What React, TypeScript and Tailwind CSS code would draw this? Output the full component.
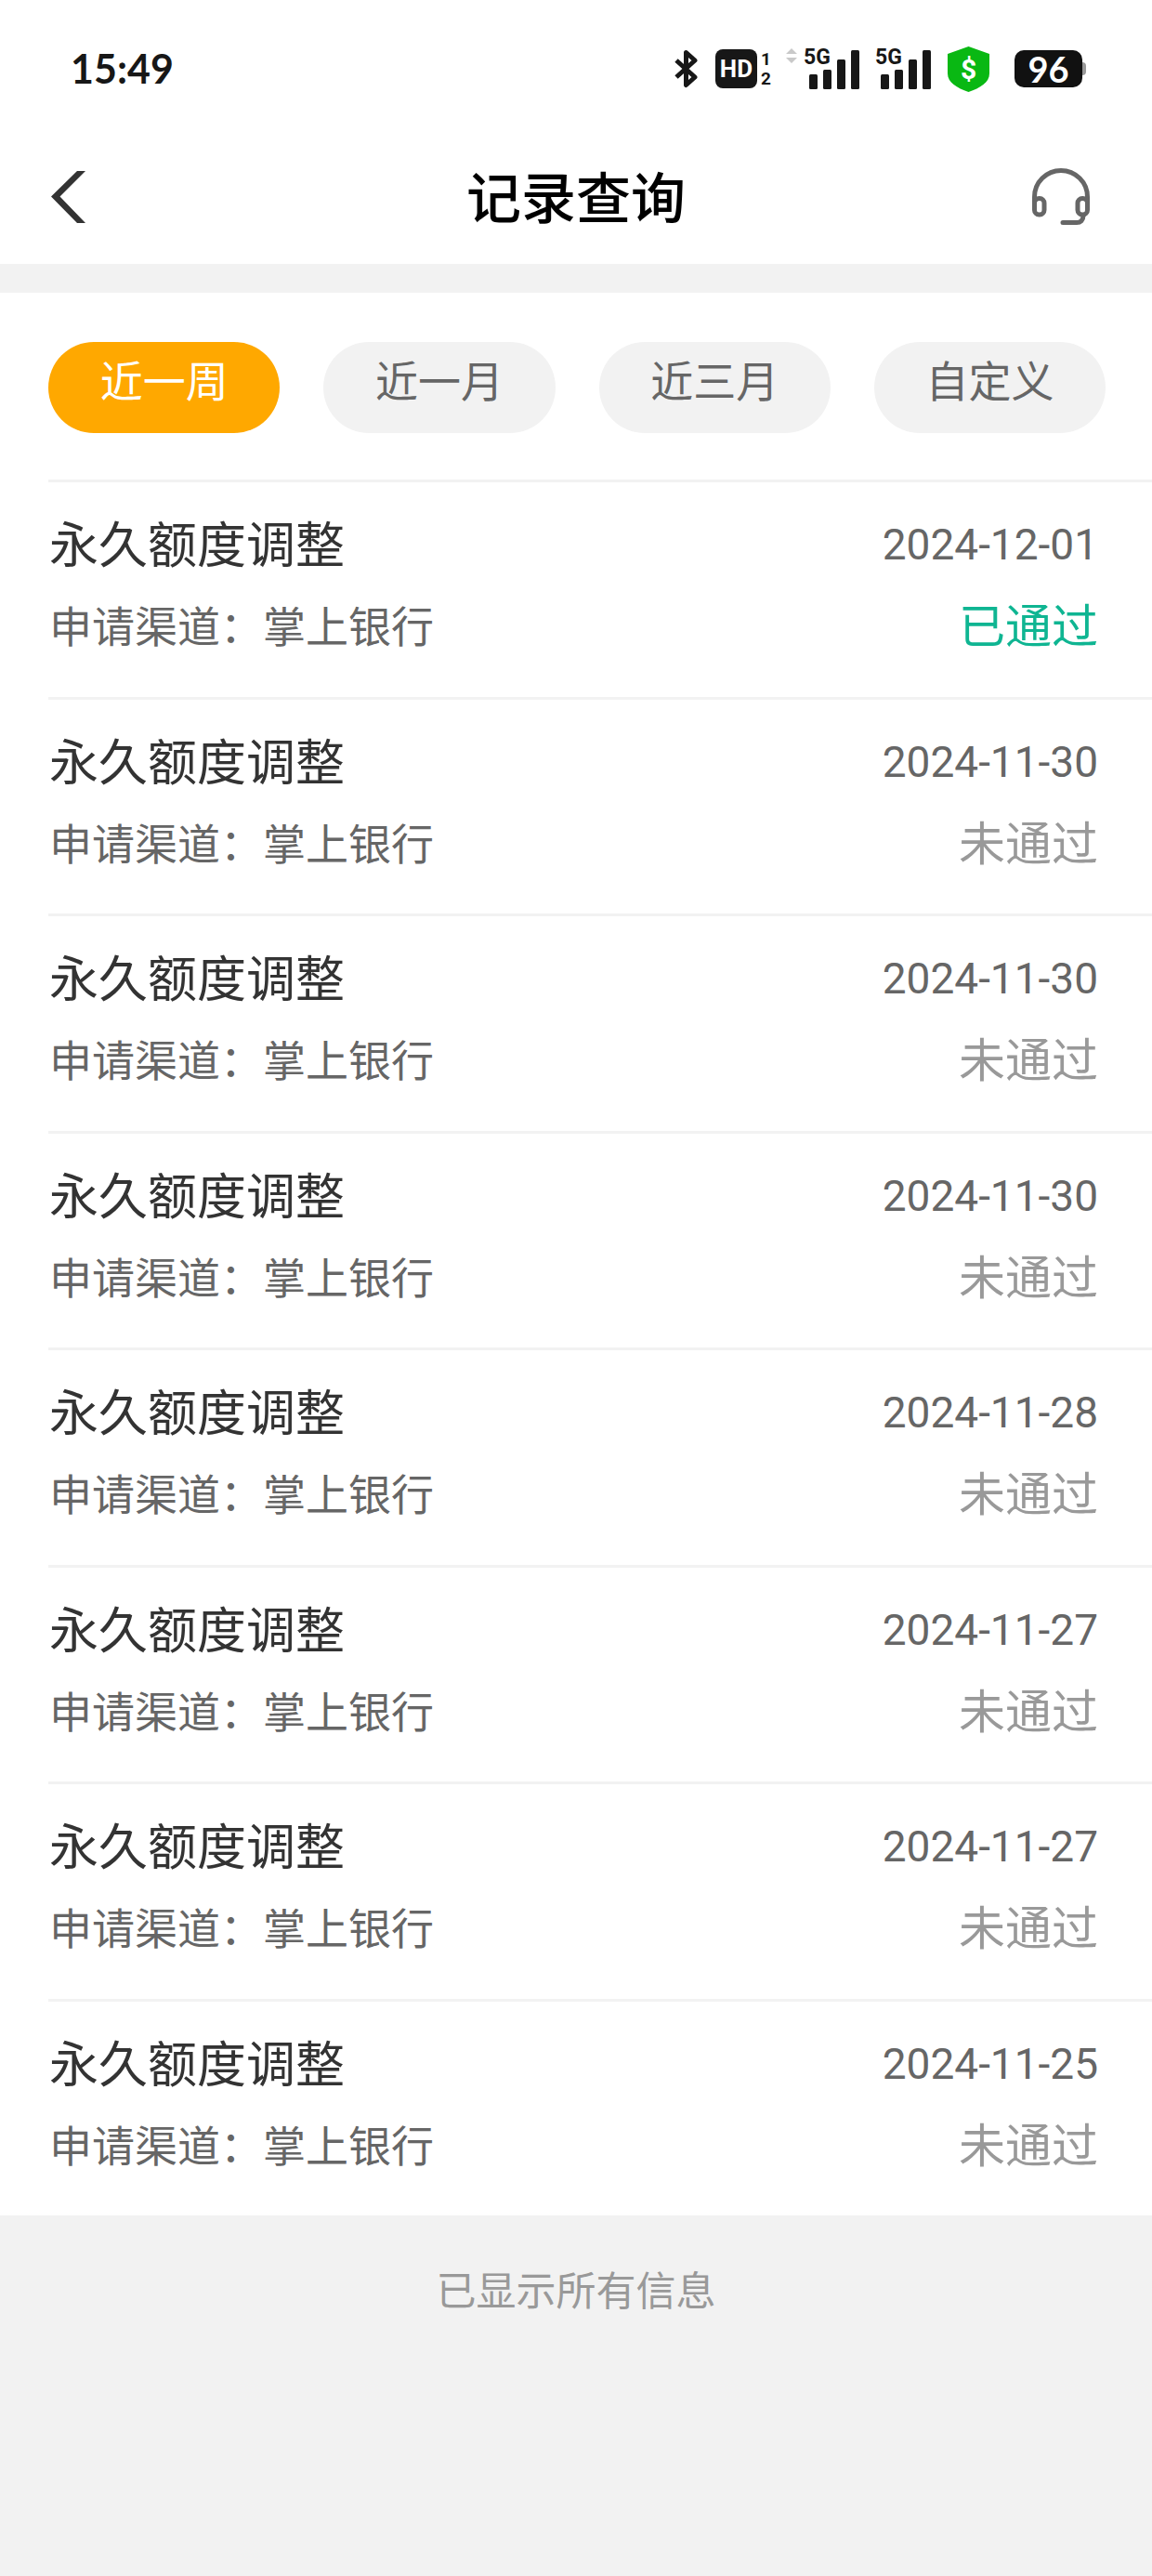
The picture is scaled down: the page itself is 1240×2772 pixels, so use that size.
import { useState } from "react";

type RecordItem = {
	id: number;
	title: string;
	channel: string;
	date: string;
	status: "passed" | "rejected";
};

const ranges = ["近一周", "近一月", "近三月", "自定义"];

const records: RecordItem[] = [
	{ id: 1, title: "永久额度调整", channel: "掌上银行", date: "2024-12-01", status: "passed" },
	{ id: 2, title: "永久额度调整", channel: "掌上银行", date: "2024-11-30", status: "rejected" },
	{ id: 3, title: "永久额度调整", channel: "掌上银行", date: "2024-11-30", status: "rejected" },
	{ id: 4, title: "永久额度调整", channel: "掌上银行", date: "2024-11-30", status: "rejected" },
	{ id: 5, title: "永久额度调整", channel: "掌上银行", date: "2024-11-28", status: "rejected" },
	{ id: 6, title: "永久额度调整", channel: "掌上银行", date: "2024-11-27", status: "rejected" },
	{ id: 7, title: "永久额度调整", channel: "掌上银行", date: "2024-11-27", status: "rejected" },
	{ id: 8, title: "永久额度调整", channel: "掌上银行", date: "2024-11-25", status: "rejected" },
];

function BluetoothIcon() {
	return (
		<svg width="26" height="42" viewBox="0 0 26 42" fill="none" stroke="#171717" strokeWidth="5">
			<path d="M2 12 22 30 12.500 38.500V3.500L22 12 2 30" strokeLinejoin="round" />
		</svg>
	);
}

function SignalIcon() {
	return (
		<div className="relative flex h-[44px] w-[60px] items-end justify-end">
			<span className="absolute top-0 left-0 font-['Roboto'] text-[23px] leading-[20px] font-bold">
				5G
			</span>
			<svg width="54" height="43" viewBox="0 0 54 43" fill="#171717">
				<rect x="0" y="27" width="9" height="16" rx="1.500" />
				<rect x="15" y="22" width="9" height="21" rx="1.500" />
				<rect x="30" y="11" width="9" height="32" rx="1.500" />
				<rect x="45" y="1" width="9" height="42" rx="1.500" />
			</svg>
		</div>
	);
}

function StatusBar() {
	return (
		<div className="flex h-[140px] items-center justify-between pt-2 pr-[71px] pl-[76px] text-[#171717]">
			<span className="font-['Lato'] text-[43px] leading-[48px] font-bold">15:49</span>
			<div className="flex items-center">
				<BluetoothIcon />
				<span className="ml-[18px] flex h-[42px] w-[45px] items-center justify-center rounded-lg bg-[#171717] font-['Roboto'] text-[26px] font-bold text-white">
					HD
				</span>
				<span className="ml-1 flex w-[11px] flex-col font-['Roboto'] text-[19px] leading-[21px] font-bold">
					<span>1</span>
					<span>2</span>
				</span>
				<svg className="mr-[7px] ml-4 -mt-7" width="12" height="16" viewBox="0 0 12 16" fill="#c9c9c9">
					<path d="M6 0 12 6H0zM0 10h12l-6 6z" />
				</svg>
				<SignalIcon />
				<div className="ml-[17px]">
					<SignalIcon />
				</div>
				<svg className="ml-[18px]" width="45" height="49" viewBox="0 0 45 49">
					<path d="M22.500 0 45 8v21c0 10-10 15.500-22.500 20C10 44.500 0 39 0 29V8z" fill="#09b813" />
					<text
						x="22.500"
						y="35"
						textAnchor="middle"
						fill="#fff"
						className="font-['Roboto'] text-[30px] font-bold"
					>
						$
					</text>
				</svg>
				<span className="ml-[27px] flex h-10 w-[73px] items-center justify-center rounded-[10px] bg-[#111] font-['Lato'] text-[38px] leading-[40px] font-bold text-white">
					96
				</span>
				<span className="h-[14px] w-1 rounded-r bg-[#999]" />
			</div>
		</div>
	);
}

function Header() {
	return (
		<header className="flex h-[144px] items-center justify-between pr-[67px] pl-[55px]">
			<button type="button" aria-label="返回" className="flex w-[74px]">
				<svg width="37" height="56" viewBox="0 0 37 56" fill="#333">
					<path d="M28 0h9L9.500 27.500 37 56h-9L0 27.500z" />
				</svg>
			</button>
			<h1 className="pt-1.5 text-[59px] leading-[72px] font-medium text-black">记录查询</h1>
			<button type="button" aria-label="客服" className="flex">
				<svg
					width="62"
					height="62"
					viewBox="0 0 62 62"
					fill="none"
					stroke="#666"
					strokeWidth="5"
					strokeLinecap="round"
				>
					<path d="M2.500 40V31a28.500 28.500 0 0 1 57 0v9" />
					<rect x="2.500" y="32.500" width="10.500" height="17.500" rx="5" />
					<rect x="49" y="32.500" width="10.500" height="17.500" rx="5" />
					<path d="M55 51c0 5-3 7.500-7 7.500H33" />
				</svg>
			</button>
		</header>
	);
}

function RecordRow({ record }: { record: RecordItem }) {
	const passed = record.status === "passed";

	return (
		<li className="ml-[52px] flex flex-col gap-[17px] border-t-3 border-[#f2f2f2] pt-[33px] pr-[58px] pl-px leading-[68px] odd:pb-[41px] even:pb-10">
			<div className="flex items-start justify-between">
				<h2 className="text-[53px] leading-[72px] text-[#333]">{record.title}</h2>
				<time className="text-[46px] text-[#666]">{record.date}</time>
			</div>
			<div className="flex justify-between">
				<p className="text-[46px] text-[#666]">申请渠道：{record.channel}</p>
				<span className={passed ? "text-[50px] text-[#0fb592]" : "text-[50px] text-[#999]"}>
					{passed ? "已通过" : "未通过"}
				</span>
			</div>
		</li>
	);
}

export default function App() {
	const [range, setRange] = useState(ranges[0]);

	return (
		<div
			lang="zh-CN"
			className="min-h-screen bg-[#f2f2f2] font-['Roboto','Noto_Sans_CJK_SC',sans-serif]"
		>
			<div className="bg-white">
				<StatusBar />
				<Header />
			</div>
			<main className="mt-[31px] bg-white">
				<div className="grid grid-cols-4 gap-[47px] pt-[53px] pr-[50px] pb-[50px] pl-[52px]">
					{ranges.map((item) => (
						<button
							key={item}
							type="button"
							aria-pressed={item === range}
							onClick={() => setRange(item)}
							className={
								item === range
									? "h-[98px] rounded-full bg-[#ffa800] pb-3 text-[46px] text-white"
									: "h-[98px] rounded-full bg-[#f2f2f2] pb-3 text-[46px] text-[#666]"
							}
						>
							{item}
						</button>
					))}
				</div>
				<ul>
					{records.map((record) => (
						<RecordRow key={record.id} record={record} />
					))}
				</ul>
			</main>
			<p className="py-12 text-center text-[43px] leading-[68px] text-[#999]">已显示所有信息</p>
		</div>
	);
}
